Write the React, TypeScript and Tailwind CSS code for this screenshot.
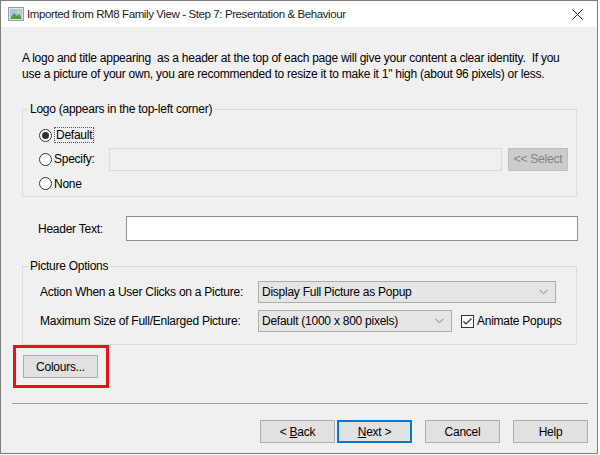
import React from "react";

const font = { fontFamily: '"Liberation Sans", Arial, sans-serif' };

const Radio = ({ checked }: { checked?: boolean }) => (
  <span className="flex h-[13px] w-[13px] shrink-0 items-center justify-center rounded-full border border-[#333] bg-white">
    {checked && <span className="h-[7px] w-[7px] rounded-full bg-[#333]" />}
  </span>
);

const Chevron = () => (
  <svg width="9" height="6" viewBox="0 0 9 6" className="text-[#7a7a7a]">
    <path d="M0.5 0.8 L4.5 4.8 L8.5 0.8" fill="none" stroke="currentColor" strokeWidth="1" />
  </svg>
);

const Combo = ({ text, width }: { text: string; width: string }) => (
  <div className={`flex h-[22px] items-center justify-between border border-[#adadad] bg-[#e5e5e5] pl-[3px] pr-[7px] ${width}`}>
    <span>{text}</span>
    <Chevron />
  </div>
);

const WinButton = ({ children, primary }: { children: React.ReactNode; primary?: boolean }) => (
  <button
    className={`flex h-[23px] w-[75px] items-center justify-center bg-[#e1e1e1] ${
      primary ? "border-2 border-[#0078d7]" : "border border-[#adadad]"
    }`}
  >
    {children}
  </button>
);

export default function App() {
  return (
    <div
      className="h-[455px] w-[600px] overflow-hidden whitespace-nowrap bg-white text-[12px] leading-[16px] tracking-[-0.25px] text-black"
      style={font}
    >
      <div className="flex h-[454px] w-[598px] flex-col border border-[#7d7d7d]">
        {/* title bar */}
        <div className="flex h-[26px] shrink-0 items-center bg-white pl-[7px] pr-[14px]">
          <svg width="16" height="16" viewBox="0 0 16 16">
            <rect x="0.5" y="1.5" width="15" height="13" fill="#dfe8ef" stroke="#8aa0b0" />
            <rect x="2" y="3" width="12" height="10" fill="#a9c8e0" />
            <path d="M2 13 L6 7 L9 10 L11 8 L14 13 Z" fill="#4f9a3a" />
            <circle cx="10.5" cy="5.5" r="1.5" fill="#f2d35b" />
          </svg>
          <span className="ml-[3px] text-[11.5px] tracking-[-0.4px] text-[#1a1a1a]">
            Imported from RM8 Family View - Step 7: Presentation &amp; Behaviour
          </span>
          <svg width="11" height="11" viewBox="0 0 11 11" className="ml-auto">
            <path d="M0.5 0.5 L10.5 10.5 M10.5 0.5 L0.5 10.5" stroke="#222" strokeWidth="1" />
          </svg>
        </div>

        {/* body */}
        <div className="flex flex-1 flex-col bg-[#f0f0f0]">
          <p className="ml-[21px] mt-[23px]">
            A logo and title appearing&nbsp; as a header at the top of each page will give your content a clear identity.&nbsp; If you
            <br />
            use a picture of your own, you are recommended to resize it to make it 1" high (about 96 pixels) or less.
          </p>

          <fieldset className="ml-[21px] mt-[19px] w-[555px] min-w-0 border border-[#dcdcdc] pl-[5px]">
            <legend className="px-[2px]">Logo (appears in the top-left corner)</legend>
            <div className="-ml-[5px] flex flex-col pl-[16px] pt-[6px]">
              <div className="flex h-[24px] items-center">
                <Radio checked />
                <span className="ml-[2px] border border-dotted border-[#555] px-[1px] leading-[14px]">Default</span>
              </div>
              <div className="flex h-[24px] items-center">
                <Radio />
                <span className="ml-[2px] w-[55px]">Specify:</span>
                <div className="h-[23px] w-[393px] border border-[#d9d9d9] bg-[#f0f0f0]" />
                <div className="ml-[6px] flex h-[23px] w-[60px] items-center justify-center border border-[#bfbfbf] bg-[#cccccc] text-[#838383]">
                  &lt;&lt; Select
                </div>
              </div>
              <div className="flex h-[25px] items-center">
                <Radio />
                <span className="ml-[2px]">None</span>
              </div>
            </div>
          </fieldset>

          <div className="mt-[19px] flex items-center pl-[37px]">
            <span className="w-[88px]">Header Text:</span>
            <div className="h-[25px] w-[452px] border border-[#8f8f8f] bg-white" />
          </div>

          <fieldset className="ml-[21px] mt-[17px] w-[555px] min-w-0 border border-[#dcdcdc] pl-[5px]">
            <legend className="px-[2px]">Picture Options</legend>
            <div className="-ml-[5px] flex flex-col gap-[7px] pb-[12px] pl-[17px] pt-[7px]">
              <div className="flex items-center">
                <span className="w-[218px]">Action When a User Clicks on a Picture:</span>
                <Combo text="Display Full Picture as Popup" width="w-[298px]" />
              </div>
              <div className="flex items-center">
                <span className="w-[218px]">Maximum Size of Full/Enlarged Picture:</span>
                <Combo text="Default (1000 x 800 pixels)" width="w-[194px]" />
                <span className="ml-[9px] flex h-[13px] w-[13px] items-center justify-center border border-[#333] bg-white">
                  <svg width="11" height="11" viewBox="0 0 11 11">
                    <path d="M1.5 5.5 L4 8 L9.5 2.5" fill="none" stroke="#333" strokeWidth="1.2" />
                  </svg>
                </span>
                <span className="ml-[3px]">Animate Popups</span>
              </div>
            </div>
          </fieldset>

          <div className="ml-[12px] w-[96px] border-[3px] border-[#e8101a] p-[7px]">
            <WinButton>Colours...</WinButton>
          </div>

          <div className="ml-[11px] mt-[15px] h-px w-[576px] bg-[#a0a0a0]" />

          <div className="mt-[16px] flex justify-end pr-[9px]">
            <WinButton>
              &lt;&nbsp;<span className="underline">B</span>ack
            </WinButton>
            <span className="ml-[2px]">
              <WinButton primary>
                <span className="underline">N</span>ext &gt;
              </WinButton>
            </span>
            <span className="ml-[13px]">
              <WinButton>Cancel</WinButton>
            </span>
            <span className="ml-[13px]">
              <WinButton>Help</WinButton>
            </span>
          </div>
        </div>
      </div>
    </div>
  );
}
